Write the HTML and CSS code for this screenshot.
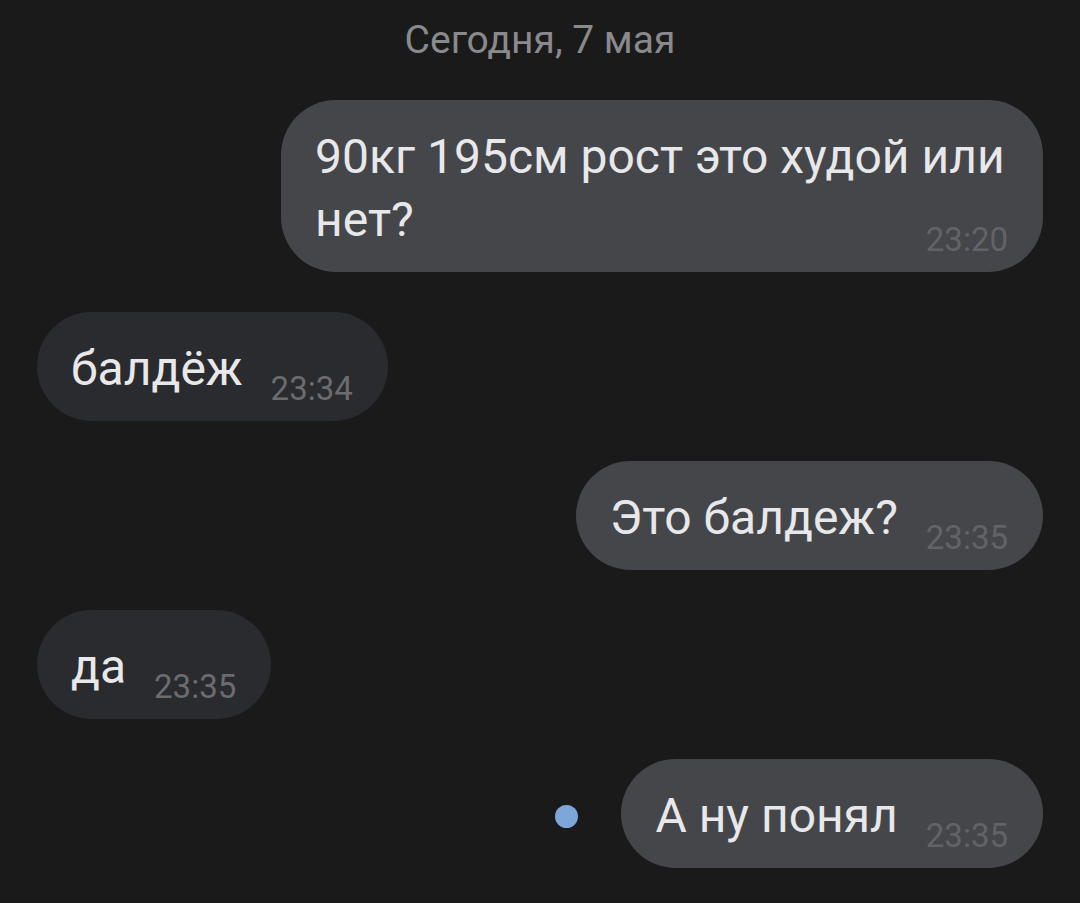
FILE: index.html
```html
<!DOCTYPE html>
<html lang="ru">
<head>
    <meta charset="UTF-8">
    <meta name="viewport" content="width=device-width, initial-scale=1.0">
    <title>Чат</title>
    <link rel="stylesheet" href="styles.css">
</head>
<body>
    <div class="chat">
        <div class="day">Сегодня, 7 мая</div>

        <div class="row out">
            <div class="bubble">
                <p class="text">90кг 195см рост это худой или нет?</p>
                <span class="time">23:20</span>
            </div>
        </div>

        <div class="row in">
            <div class="bubble">
                <p class="text">балдёж</p>
                <span class="time">23:34</span>
            </div>
        </div>

        <div class="row out">
            <div class="bubble">
                <p class="text">Это балдеж?</p>
                <span class="time">23:35</span>
            </div>
        </div>

        <div class="row in">
            <div class="bubble">
                <p class="text">да</p>
                <span class="time">23:35</span>
            </div>
        </div>

        <div class="row out">
            <span class="unread"></span> <!-- not read yet -->
            <div class="bubble">
                <p class="text">А ну понял</p>
                <span class="time">23:35</span>
            </div>
        </div>
    </div>
</body>
</html>
```

FILE: styles.css
```css
/* dark chat screen */
body {
    margin: 0;
    background-color: #1a1a1b;
    font-family: Roboto, 'Noto Sans', sans-serif;
    color: #e8e8ea;
}

.chat {
    display: flex;
    flex-direction: column;
    gap: 40px;
    padding: 0 37px;
}

.day {
    padding-top: 18px;
    margin-bottom: -2px;
    font-size: 39px;
    line-height: 44px;
    color: #8a8a8c;
    text-align: center;
}

.row {
    display: flex;
    align-items: center;
}

.row.out {
    justify-content: flex-end;
}

.bubble {
    display: flex;
    flex-wrap: wrap;
    justify-content: flex-end;
    align-items: flex-end;
    max-width: 762px;
    box-sizing: border-box;
    padding: 25px 35px 21px 34px;
    border-radius: 55px;
    background-color: #2a2b2e;
}

.row.out .bubble {
    background-color: #45464a;
}

.text {
    margin: 0;
    font-size: 48px;
    line-height: 63px;
}

.time {
    margin-left: 28px;
    margin-top: -23px;
    font-size: 33px;
    line-height: 23px;
    color: #6c6c6e;
}

.row.out .time {
    color: #626367;
}

.unread {
    width: 23px;
    height: 23px;
    margin-right: 43px;
    margin-top: 5px;
    border-radius: 50%;
    background-color: #7ea6d8;
}
```
